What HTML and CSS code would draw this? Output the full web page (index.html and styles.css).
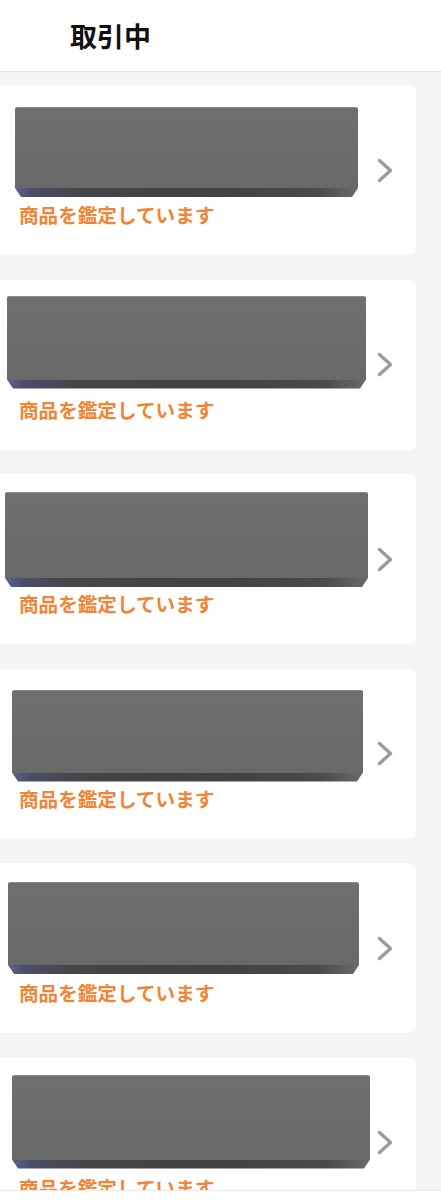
FILE: index.html
```html
<!DOCTYPE html>
<html lang="ja">
<head>
<meta charset="utf-8">
<title>取引中</title>
<link rel="stylesheet" href="styles.css">
</head>
<body>
<header class="header"><h1 class="title">取引中</h1></header>
<main class="list">
  <a class="card">
    <div class="body">
      <div class="thumb"><div class="block block-1"><div class="top"></div><div class="front"></div></div></div>
      <p class="status">商品を鑑定しています</p>
    </div>
    <svg class="chev" viewBox="0 0 16 25" width="16" height="25"><polyline points="2.5,2.5 13.5,12.5 2.5,22.5"/></svg>
  </a>
  <a class="card">
    <div class="body">
      <div class="thumb"><div class="block block-2"><div class="top"></div><div class="front"></div></div></div>
      <p class="status">商品を鑑定しています</p>
    </div>
    <svg class="chev" viewBox="0 0 16 25" width="16" height="25"><polyline points="2.5,2.5 13.5,12.5 2.5,22.5"/></svg>
  </a>
  <a class="card">
    <div class="body">
      <div class="thumb"><div class="block block-3"><div class="top"></div><div class="front"></div></div></div>
      <p class="status">商品を鑑定しています</p>
    </div>
    <svg class="chev" viewBox="0 0 16 25" width="16" height="25"><polyline points="2.5,2.5 13.5,12.5 2.5,22.5"/></svg>
  </a>
  <a class="card">
    <div class="body">
      <div class="thumb"><div class="block block-4"><div class="top"></div><div class="front"></div></div></div>
      <p class="status">商品を鑑定しています</p>
    </div>
    <svg class="chev" viewBox="0 0 16 25" width="16" height="25"><polyline points="2.5,2.5 13.5,12.5 2.5,22.5"/></svg>
  </a>
  <a class="card">
    <div class="body">
      <div class="thumb"><div class="block block-5"><div class="top"></div><div class="front"></div></div></div>
      <p class="status">商品を鑑定しています</p>
    </div>
    <svg class="chev" viewBox="0 0 16 25" width="16" height="25"><polyline points="2.5,2.5 13.5,12.5 2.5,22.5"/></svg>
  </a>
  <a class="card">
    <div class="body">
      <div class="thumb"><div class="block block-6"><div class="top"></div><div class="front"></div></div></div>
      <p class="status">商品を鑑定しています</p>
    </div>
    <svg class="chev" viewBox="0 0 16 25" width="16" height="25"><polyline points="2.5,2.5 13.5,12.5 2.5,22.5"/></svg>
  </a>
</main>
<div class="tabbar"></div>
</body>
</html>
```
FILE: styles.css
```css
* { box-sizing: border-box; }
html, body { margin: 0; padding: 0; }
body {
  background: #f4f4f4;
  font-family: "Noto Sans CJK JP", "Noto Sans", sans-serif;
  width: 441px;
  height: 1200px;
  overflow: hidden;
}
.header {
  height: 72px;
  background: #fff;
  border-bottom: 1px solid #e3e3e3;
  display: flex;
  align-items: center;
  padding-left: 70px;
}
.title {
  margin: 0;
  font-size: 27px;
  font-weight: 700;
  color: #111;
  line-height: 1;
}
.list {
  padding: 13px 25px 0 0;
  display: flex;
  flex-direction: column;
  gap: 24.5px;
}
.card {
  height: 170px;
  background: #fff;
  border-radius: 0 6px 6px 0;
  display: flex;
  align-items: center;
}
.body {
  flex: 1;
  align-self: flex-start;
}
.thumb {
  height: 118px;
  overflow: hidden;
}
.block {
  display: flex;
  flex-direction: column;
}
.top {
  flex: 1;
  background: linear-gradient(180deg, #6f6f6f 0%, #6c6c6c 50%, #696969 100%);
  border-top: 1px solid #8a8a92;
  border-radius: 2px 2px 0 0;
}
.front {
  height: 9px;
  background: linear-gradient(90deg, #5a6396 0%, #4a4d68 5%, #454547 20%, #424242 60%, #4a4a4a 88%, #6a6a6a 100%);
  clip-path: polygon(0 0, 100% 0, calc(100% - 6px) 100%, 6px 100%);
}
.block-1 { margin: 22px 0 0 15px; width: 343px; height: 90px; }
.block-2 { margin: 16px 0 0 7px; width: 359px; height: 93px; }
.block-3 { margin: 18px 0 0 5px; width: 363px; height: 95px; }
.block-4 { margin: 21px 0 0 12px; width: 351px; height: 92px; }
.block-5 { margin: 19px 0 0 8px; width: 351px; height: 92px; }
.block-6 { margin: 17px 0 0 12px; width: 358px; height: 94px; }
.status {
  margin: 0;
  padding-left: 19px;
  font-size: 19.6px;
  line-height: 24px;
  font-weight: 700;
  color: #f08536;
  white-space: nowrap;
}
.chev {
  flex: none;
  margin-right: 23px;
  fill: none;
  stroke: #9b9b9b;
  stroke-width: 3.4;
  stroke-linecap: round;
  stroke-linejoin: round;
}
.tabbar {
  position: fixed;
  left: 0;
  right: 0;
  bottom: 0;
  height: 10px;
  background: #fff;
  border-top: 1px solid #ececec;
}
```
